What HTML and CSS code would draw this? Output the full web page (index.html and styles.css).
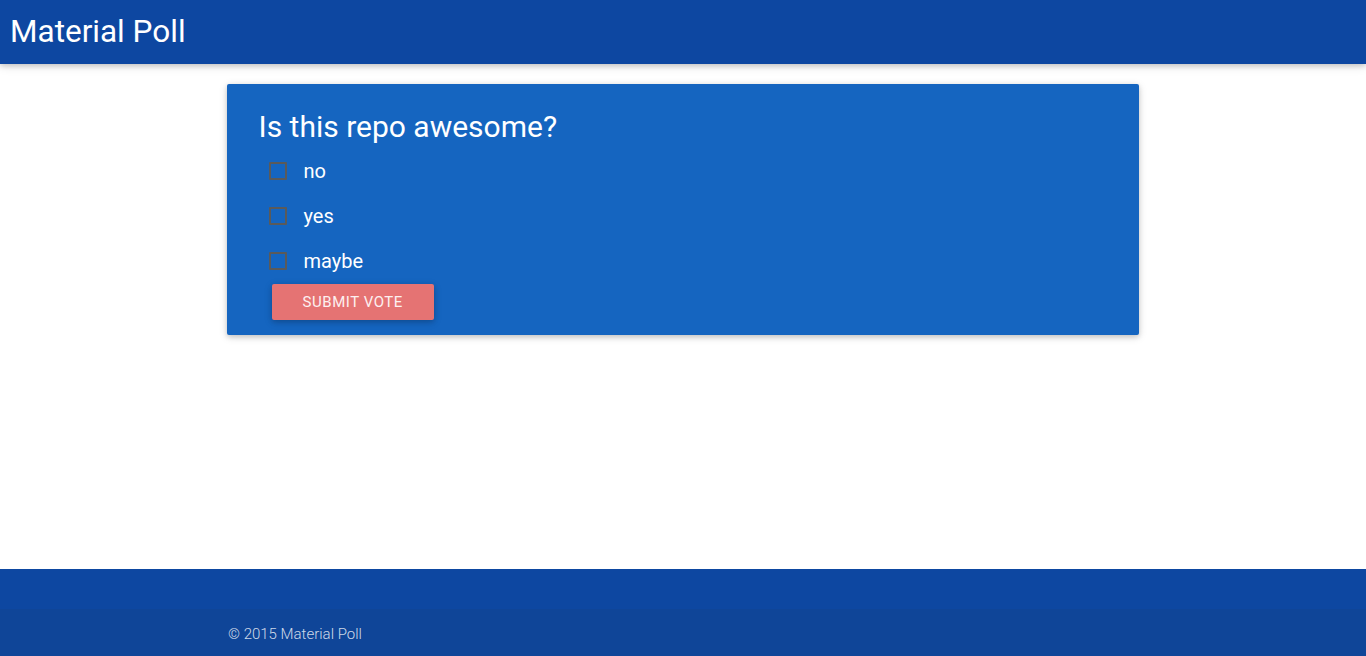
FILE: index.html
```html
<!DOCTYPE html>
<html>
<head>
<meta charset="utf-8">
<link rel="stylesheet" href="styles.css">
</head>
<body>
<header class="nav">
  <span class="brand">Material Poll</span>
</header>
<main class="main">
  <div class="card">
    <h2 class="card-title">Is this repo awesome?</h2>
    <ul class="options">
      <li class="option"><span class="box"></span><span class="label">no</span></li>
      <li class="option"><span class="box"></span><span class="label">yes</span></li>
      <li class="option"><span class="box"></span><span class="label">maybe</span></li>
    </ul>
    <button class="btn">Submit vote</button>
  </div>
</main>
<footer class="footer">
  <div class="footer-top"></div>
  <div class="copyright"><span class="copy-text">© 2015 Material Poll</span></div>
</footer>
</body>
</html>
```

FILE: styles.css
```css
html, body {
  margin: 0;
  padding: 0;
  height: 100%;
}
body {
  font-family: Roboto, "Liberation Sans", sans-serif;
  display: flex;
  flex-direction: column;
  background: #fff;
  overflow: hidden;
}
.nav {
  height: 64px;
  flex: 0 0 64px;
  background: #0d47a1;
  box-shadow: 0 2px 5px 0 rgba(0,0,0,0.16), 0 2px 10px 0 rgba(0,0,0,0.12);
  display: flex;
  align-items: center;
  padding-left: 10px;
  position: relative;
  z-index: 2;
}
.brand {
  color: #fff;
  font-size: 31.5px;
  font-weight: 400;
  line-height: 64px;
}
.main {
  flex: 1;
  padding-top: 20px;
  display: flex;
  justify-content: center;
  align-items: flex-start;
}
.card {
  width: 912px;
  margin-left: -1px;
  background: #1565c0;
  border-radius: 2px;
  box-shadow: 0 2px 5px 0 rgba(0,0,0,0.16), 0 2px 10px 0 rgba(0,0,0,0.12);
  padding: 24px 32px 15px 32px;
  box-sizing: border-box;
  color: #fff;
}
.card-title {
  margin: 0 0 2px 0;
  font-size: 30px;
  font-weight: 400;
  line-height: 38px;
}
.options {
  list-style: none;
  margin: 0 0 1px 0;
  padding: 0 0 0 10px;
}
.option {
  display: flex;
  align-items: center;
  height: 45px;
}
.box {
  width: 18px;
  height: 18px;
  box-sizing: border-box;
  border: 2px solid #5a5a5a;
  border-radius: 1px;
  margin-right: 17px;
}
.label {
  font-size: 20px;
}
.btn {
  margin-left: 13px;
  margin-top: 0;
  height: 36px;
  padding: 0 31px 0 31px;
  border: none;
  border-radius: 2px;
  background: #e57373;
  color: #fdf0f0;
  font-family: Roboto, "Liberation Sans", sans-serif;
  font-size: 15px;
  font-weight: 400;
  letter-spacing: 0.55px;
  text-transform: uppercase;
  box-shadow: 0 2px 5px 0 rgba(0,0,0,0.16), 0 2px 10px 0 rgba(0,0,0,0.12);
}
.footer {
  flex: 0 0 87px;
  height: 87px;
  overflow: hidden;
  background: #0d47a1;
  display: flex;
  flex-direction: column;
}
.footer-top {
  flex: 0 0 40px;
}
.copyright {
  flex: 0 0 50px;
  background: rgba(51,51,51,0.08);
  display: flex;
  justify-content: center;
}
.copy-text {
  width: 912px;
  color: rgba(255,255,255,0.8);
  font-size: 15px;
  font-weight: 300;
  line-height: 50px;
  padding-left: 1px;
  box-sizing: border-box;
}
```
